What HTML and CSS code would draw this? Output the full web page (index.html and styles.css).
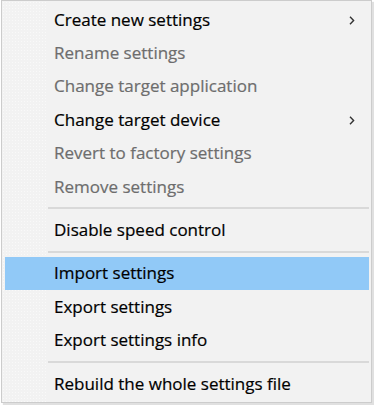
FILE: index.html
```html
<!DOCTYPE html>
<html lang="en">
<head>
<meta charset="utf-8">
<title>Settings menu</title>
<link rel="stylesheet" href="styles.css">
</head>
<body>
<div class="menu">
  <div class="gutter"></div>
  <ul class="items">
    <li class="item"><span class="label">Create new settings</span><svg class="chev" viewBox="0 0 6 9" width="6" height="9"><path d="M1 0.8 L4.6 4.5 L1 8.2" fill="none" stroke="#333" stroke-width="1.4"/></svg></li>
    <li class="item disabled"><span class="label">Rename settings</span></li>
    <li class="item disabled"><span class="label">Change target application</span></li>
    <li class="item"><span class="label">Change target device</span><svg class="chev" viewBox="0 0 6 9" width="6" height="9"><path d="M1 0.8 L4.6 4.5 L1 8.2" fill="none" stroke="#333" stroke-width="1.4"/></svg></li>
    <li class="item disabled"><span class="label">Revert to factory settings</span></li>
    <li class="item disabled"><span class="label">Remove settings</span></li>
    <li class="sep"></li>
    <li class="item"><span class="label">Disable speed control</span></li>
    <li class="sep"></li>
    <li class="item active"><span class="label">Import settings</span></li>
    <li class="item"><span class="label">Export settings</span></li>
    <li class="item"><span class="label">Export settings info</span></li>
    <li class="sep"></li>
    <li class="item"><span class="label">Rebuild the whole settings file</span></li>
  </ul>
</div>
</body>
</html>
```

FILE: styles.css
```css
html, body {
  margin: 0;
  padding: 0;
  background: #ffffff;
}
body {
  width: 374px;
  height: 405px;
  overflow: hidden;
}
.menu {
  position: relative;
  box-sizing: border-box;
  margin-left: 1px;
  width: 371px;
  height: 403px;
  background: #f2f2f2;
  border: 1px solid #cccccc;
  box-shadow: 2px 2px 1px rgba(0, 0, 0, 0.12);
  font-family: "Open Sans", "Noto Sans", sans-serif;
  font-size: 17px;
  color: #000000;
}
.gutter {
  position: absolute;
  left: 0;
  top: 0;
  bottom: 0;
  width: 44px;
  background-image: radial-gradient(circle, rgba(255,255,255,0.5) 0.6px, transparent 0.7px);
  background-size: 3px 3px;
}
.items {
  position: relative;
  list-style: none;
  margin: 0;
  padding: 2px 2px 0 3px;
  display: flex;
  flex-direction: column;
}
.item {
  height: 33.4px;
  display: flex;
  align-items: center;
  justify-content: space-between;
  padding: 0 14px 0 49px;
  box-sizing: border-box;
  white-space: nowrap;
}
.label {
  display: block;
  line-height: 20px;
  transform: translateY(-0.5px);
  -webkit-text-stroke: 0.2px currentColor;
}
.item.disabled {
  color: #6d6d6d;
}
.item.active {
  background: #91c9f7;
}
.chev {
  display: block;
  transform: translateY(1px);
}
.sep {
  height: 10px;
  display: flex;
  align-items: center;
  padding-left: 43px;
  box-sizing: border-box;
}
.sep::before {
  content: "";
  display: block;
  flex: 1;
  height: 2px;
  background: #d9d9d9;
}
```
